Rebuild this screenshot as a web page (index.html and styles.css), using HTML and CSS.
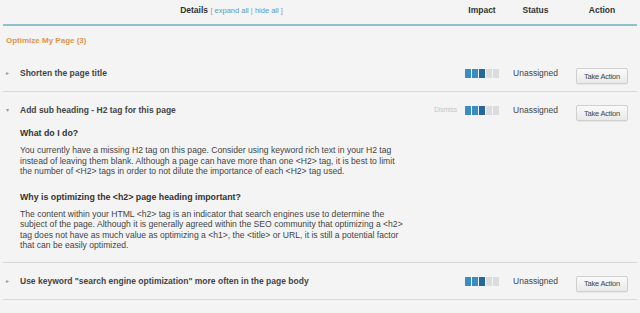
FILE: index.html
```html
<!DOCTYPE html>
<html lang="en">
<head>
  <meta charset="UTF-8">
  <meta name="viewport" content="width=device-width, initial-scale=1.0">
  <title>Optimize My Page</title>
  <link rel="stylesheet" href="styles.css">
</head>
<body>
  <div class="table">
    <div class="table-head">
      <div class="col-details">
        <strong>Details</strong>
        <span class="links">[ <a href="#">expand all</a> | <a href="#">hide all</a> ]</span>
      </div>
      <div class="col-impact">Impact</div>
      <div class="col-status">Status</div>
      <div class="col-action">Action</div>
    </div>

    <div class="section-title">Optimize My Page (3)</div>

    <div class="task">
      <div class="task-head">
        <div class="task-title"><span class="toggle">&#9656;</span>Shorten the page title</div>
        <div class="impact"><span class="on"></span><span class="on"></span><span class="on dark"></span><span></span><span></span></div>
        <div class="status">Unassigned</div>
        <div class="action"><button class="take-btn">Take Action</button></div>
      </div>
    </div>

    <div class="task open">
      <div class="task-head">
        <div class="task-title"><span class="toggle">&#9662;</span>Add sub heading - H2 tag for this page<span class="dismiss">Dismiss</span></div>
        <div class="impact"><span class="on"></span><span class="on"></span><span class="on dark"></span><span></span><span></span></div>
        <div class="status">Unassigned</div>
        <div class="action"><button class="take-btn">Take Action</button></div>
      </div>
      <div class="task-body">
        <h4>What do I do?</h4>
        <p>You currently have a missing H2 tag on this page. Consider using keyword rich text in your H2 tag instead of leaving them blank. Although a page can have more than one &lt;H2&gt; tag, it is best to limit the number of &lt;H2&gt; tags in order to not dilute the importance of each &lt;H2&gt; tag used.</p>
        <h4>Why is optimizing the &lt;h2&gt; page heading important?</h4>
        <p>The content within your HTML &lt;h2&gt; tag is an indicator that search engines use to determine the subject of the page. Although it is generally agreed within the SEO community that optimizing a &lt;h2&gt; tag does not have as much value as optimizing a &lt;h1&gt;, the &lt;title&gt; or URL, it is still a potential factor that can be easily optimized.</p>
      </div>
    </div>

    <div class="task">
      <div class="task-head">
        <div class="task-title"><span class="toggle">&#9656;</span>Use keyword "search engine optimization" more often in the page body</div>
        <div class="impact"><span class="on"></span><span class="on"></span><span class="on dark"></span><span></span><span></span></div>
        <div class="status">Unassigned</div>
        <div class="action"><button class="take-btn">Take Action</button></div>
      </div>
    </div>
  </div>
</body>
</html>
```

FILE: styles.css
```css
* {
  margin: 0;
  padding: 0;
  box-sizing: border-box;
}

body {
  font-family: "Liberation Sans", Arial, Helvetica, sans-serif;
  background: #f4f4f4;
  color: #333;
  padding: 0 3px;
}

.table-head,
.task-head {
  display: grid;
  grid-template-columns: 1fr 44px 63px 70px;
}

.table-head {
  height: 26px;
  border-bottom: 2px solid #8fc0cc;
  align-items: center;
  font-size: 8.5px;
  font-weight: bold;
  color: #333;
  padding-bottom: 4px;
}

.table-head > div {
  text-align: center;
}

.col-details .links {
  font-weight: normal;
  color: #999;
  font-size: 7.5px;
}

.col-details a {
  color: #5a9cc0;
  text-decoration: none;
}

.section-title {
  color: #e39548;
  font-weight: bold;
  font-size: 8px;
  line-height: 10px;
  padding: 10px 3px 9px;
}

.task {
  border-bottom: 1px solid #d8d8d8;
}

.task-head {
  height: 36px;
  padding-top: 13px;
  align-items: start;
}

.task-title {
  display: flex;
  font-size: 8.5px;
  line-height: 10px;
  font-weight: bold;
  color: #444;
}

.toggle {
  width: 17px;
  padding-left: 3px;
  color: #999;
  font-size: 6px;
  font-weight: normal;
}

.dismiss {
  margin-left: auto;
  margin-right: 3px;
  font-size: 6.5px;
  font-weight: normal;
  color: #c4c4c4;
}

.impact {
  display: flex;
  justify-content: center;
  gap: 1px;
  margin-top: 1px;
}

.impact span {
  width: 6px;
  height: 9px;
  background: #dcdcdc;
}

.impact span.on {
  background: #3b8dbf;
}

.impact span.on.dark {
  background: #24679b;
}

.status {
  text-align: center;
  font-size: 8.5px;
  line-height: 10px;
  color: #444;
}

.action {
  display: flex;
  justify-content: center;
}

.take-btn {
  width: 52px;
  height: 16px;
  font-family: "Liberation Sans", Arial, sans-serif;
  font-size: 7.5px;
  letter-spacing: -0.2px;
  color: #444;
  background: linear-gradient(#fafafa, #e9e9e9);
  border: 1px solid #cfcfcf;
  border-radius: 2px;
  box-shadow: 0 1px 1px rgba(0,0,0,0.06);
}

.task-body {
  padding: 0 0 11px 17px;
}

.task-body h4 {
  font-size: 8.8px;
  line-height: 10px;
  color: #333;
  margin-bottom: 7px;
}

.task-body p {
  font-size: 8.6px;
  line-height: 10.5px;
  color: #444;
  max-width: 386px;
  margin-bottom: 15px;
}

.task-body p:last-child {
  margin-bottom: 0;
}
```
